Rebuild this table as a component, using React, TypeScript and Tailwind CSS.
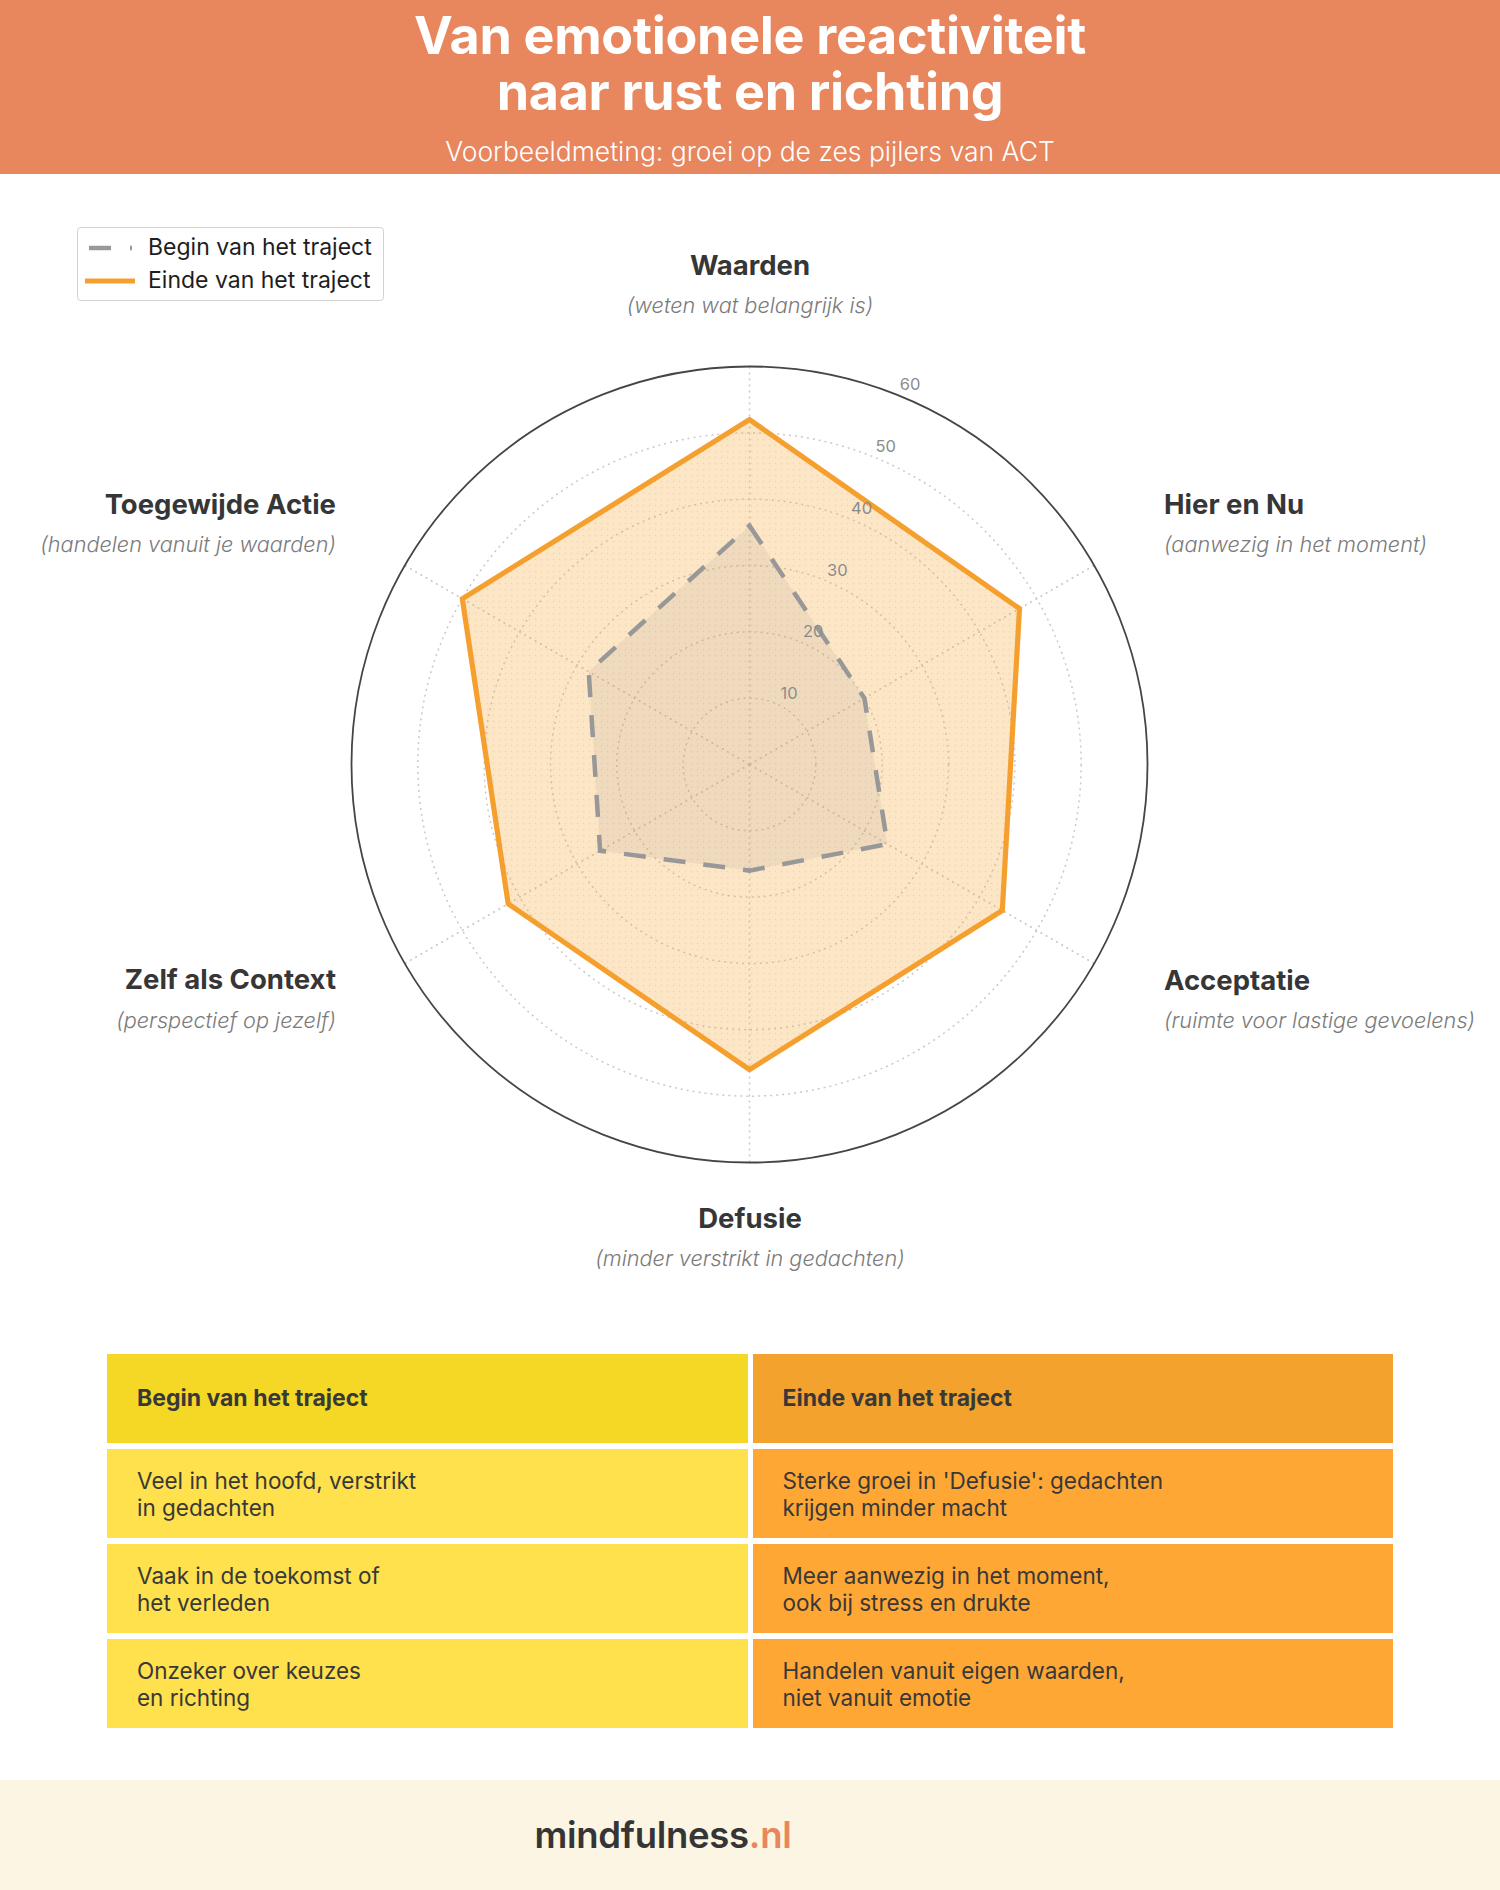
import React from "react";

const CX = 749.5;
const CY = 764.5;
const R = 398;
const MAX = 60;
const ANG = [0, 60, 120, 180, 240, 300];

const begin = [36, 20, 24, 16, 26, 28];
const einde = [52, 47, 44, 46, 42, 50];

function pt(v: number, i: number): [number, number] {
  const a = (ANG[i] * Math.PI) / 180;
  const r = (v / MAX) * R;
  return [CX + r * Math.sin(a), CY - r * Math.cos(a)];
}

function poly(vals: number[]) {
  return vals
    .map((v, i) => {
      const [x, y] = pt(v, i);
      return `${x.toFixed(1)},${y.toFixed(1)}`;
    })
    .join(" ");
}

const FONT = "Inter, 'Open Sans', sans-serif";

const labels = [
  { t: "Waarden", s: "(weten wat belangrijk is)", x: 750, y1: 265, y2: 305, a: "middle" },
  { t: "Hier en Nu", s: "(aanwezig in het moment)", x: 1164, y1: 504, y2: 544, a: "start" },
  { t: "Acceptatie", s: "(ruimte voor lastige gevoelens)", x: 1164, y1: 980, y2: 1020, a: "start" },
  { t: "Defusie", s: "(minder verstrikt in gedachten)", x: 750, y1: 1218, y2: 1258, a: "middle" },
  { t: "Zelf als Context", s: "(perspectief op jezelf)", x: 336, y1: 979, y2: 1020, a: "end" },
  { t: "Toegewijde Actie", s: "(handelen vanuit je waarden)", x: 336, y1: 504, y2: 544, a: "end" },
];

function Radar() {
  const tickA = (21.4 * Math.PI) / 180;
  return (
    <svg
      width={1500}
      height={1180}
      viewBox="0 174 1500 1180"
      className="block"
      fontFamily={FONT}
    >
      <defs>
        <pattern id="dots" width="6" height="6" patternUnits="userSpaceOnUse">
          <circle cx="1.5" cy="1.5" r="0.7" fill="#e0a866" opacity="0.35" />
        </pattern>
      </defs>
      {[1, 2, 3, 4, 5].map((k) => (
        <circle
          key={k}
          cx={CX}
          cy={CY}
          r={(R * k) / 6}
          fill="none"
          stroke="#c9c9c9"
          strokeWidth={1.5}
          strokeDasharray="2 4"
        />
      ))}
      {ANG.map((a, i) => {
        const [x, y] = pt(60, i);
        return (
          <line
            key={a}
            x1={CX}
            y1={CY}
            x2={x}
            y2={y}
            stroke="#c9c9c9"
            strokeWidth={1.5}
            strokeDasharray="2 4"
          />
        );
      })}
      <polygon points={poly(einde)} fill="rgba(248,168,58,0.29)" />
      <polygon points={poly(einde)} fill="url(#dots)" />
      <polygon points={poly(begin)} fill="rgba(150,140,130,0.13)" />
      <polygon
        points={poly(begin)}
        fill="none"
        stroke="#989898"
        strokeWidth={4.5}
        strokeDasharray="22 18"
        strokeLinejoin="miter"
      />
      <polygon
        points={poly(einde)}
        fill="none"
        stroke="#F5A02E"
        strokeWidth={5.2}
        strokeLinejoin="miter"
      />
      <circle cx={CX} cy={CY} r={R} fill="none" stroke="#454545" strokeWidth={1.8} />
      {[10, 20, 30, 40, 50, 60].map((v) => {
        const r = (v / MAX) * R;
        return (
          <text
            key={v}
            x={CX + 15.3 + r * Math.sin(tickA)}
            y={CY - 9.5 - r * Math.cos(tickA)}
            textAnchor="middle"
            dominantBaseline="central"
            fontSize={16.5}
            fill="#8c8c8c"
          >
            {v}
          </text>
        );
      })}
      {labels.map((l) => (
        <g key={l.t}>
          <text
            x={l.x}
            y={l.y1}
            textAnchor={l.a as "middle" | "start" | "end"}
            dominantBaseline="central"
            fontSize={27.5}
            fontWeight={700}
            fill="#363636"
          >
            {l.t}
          </text>
          <text
            x={l.x}
            y={l.y2}
            textAnchor={l.a as "middle" | "start" | "end"}
            dominantBaseline="central"
            fontSize={21.7}
            fontStyle="italic"
            fontWeight={300}
            fill="#7b7b7b"
          >
            {l.s}
          </text>
        </g>
      ))}
    </svg>
  );
}

function Legend() {
  return (
    <div className="absolute left-[77px] top-[53px] w-[307px] h-[74px] rounded-[4px] border-[1.5px] border-[#d2d2d2] bg-white flex flex-col justify-center">
      <div className="flex items-center h-[33px]">
        <svg width="70" height="10" className="block shrink-0">
          <line x1="11" y1="5" x2="33" y2="5" stroke="#989898" strokeWidth="4.5" />
          <line x1="52" y1="5" x2="54" y2="5" stroke="#989898" strokeWidth="4.5" />
        </svg>
        <span className="text-[23px] text-[#1e1e1e] leading-none whitespace-nowrap">Begin van het traject</span>
      </div>
      <div className="flex items-center h-[33px]">
        <svg width="70" height="10" className="block shrink-0">
          <line x1="7" y1="5" x2="57" y2="5" stroke="#F5A02E" strokeWidth="5.2" />
        </svg>
        <span className="text-[23px] text-[#1e1e1e] leading-none whitespace-nowrap">Einde van het traject</span>
      </div>
    </div>
  );
}

const rows: [string[], string[]][] = [
  [
    ["Veel in het hoofd, verstrikt", "in gedachten"],
    ["Sterke groei in 'Defusie': gedachten", "krijgen minder macht"],
  ],
  [
    ["Vaak in de toekomst of", "het verleden"],
    ["Meer aanwezig in het moment,", "ook bij stress en drukte"],
  ],
  [
    ["Onzeker over keuzes", "en richting"],
    ["Handelen vanuit eigen waarden,", "niet vanuit emotie"],
  ],
];

function Cell({ lines, bg }: { lines: string[]; bg: string }) {
  return (
    <div className={`h-[89px] flex items-center pl-[30px] ${bg}`}>
      <p className="text-[22.5px] leading-[27px] text-[#383838]">
        {lines[0]}
        <br />
        {lines[1]}
      </p>
    </div>
  );
}

export default function App() {
  return (
    <div className="w-[1500px] h-[1890px] bg-white font-[Inter,'Open_Sans',sans-serif] flex flex-col">
      <header className="h-[174px] bg-[#E8865E] flex flex-col items-center pt-[8px] text-white">
        <h1 className="text-[52px] leading-[56px] font-bold text-center tracking-[-0.3px]">
          Van emotionele reactiviteit
          <br />
          naar rust en richting
        </h1>
        <p className="mt-[16px] text-[26.5px] leading-[30px] font-light">
          Voorbeeldmeting: groei op de zes pijlers van ACT
        </p>
      </header>

      <section className="relative h-[1180px]">
        <Radar />
        <Legend />
      </section>

      <section className="ml-[107px] w-[1286px] grid grid-cols-2 gap-x-[5px] gap-y-[6px]">
        <div className="h-[89px] flex items-center pl-[30px] bg-[#F5D725]">
          <span className="text-[23px] font-bold text-[#383838]">Begin van het traject</span>
        </div>
        <div className="h-[89px] flex items-center pl-[30px] bg-[#F4A22E]">
          <span className="text-[23px] font-bold text-[#383838]">Einde van het traject</span>
        </div>
        {rows.map((r, i) => (
          <React.Fragment key={i}>
            <Cell lines={r[0]} bg="bg-[#FFE04D]" />
            <Cell lines={r[1]} bg="bg-[#FFA735]" />
          </React.Fragment>
        ))}
      </section>

      <footer className="mt-auto h-[110px] bg-[#FDF5E3] flex items-center justify-center pr-[174px]">
        <span className="text-[36.5px] font-semibold text-[#353535] tracking-[-0.3px]">
          mindfulness<span className="text-[#E8865E]">.nl</span>
        </span>
      </footer>
    </div>
  );
}
